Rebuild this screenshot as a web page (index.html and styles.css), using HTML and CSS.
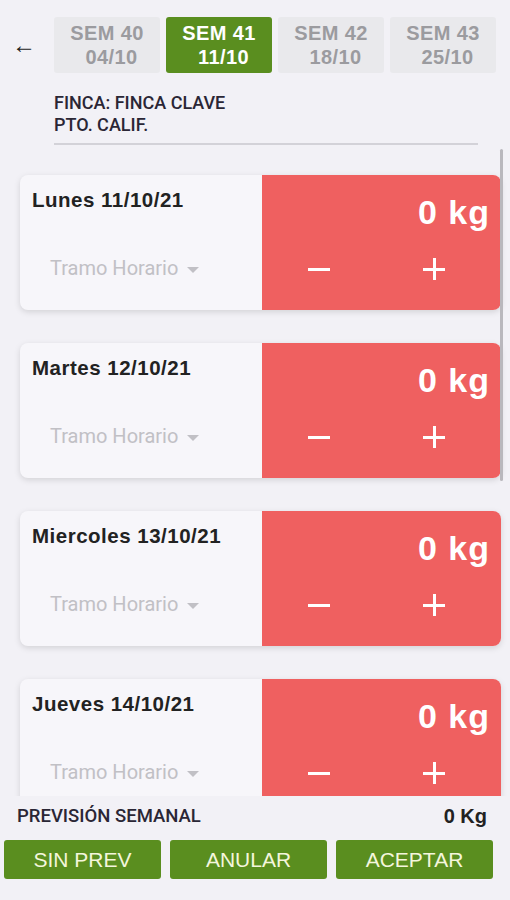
FILE: index.html
```html
<!DOCTYPE html>
<html lang="es">
<head>
  <meta charset="UTF-8" />
  <meta name="viewport" content="width=device-width, initial-scale=1.0" />
  <title>Previsión semanal</title>
  <link rel="stylesheet" href="styles.css">
</head>
<body>
  <header class="top">
    <button class="back">&larr;</button>
    <nav class="weeks">
      <div class="week">SEM 40<span>04/10</span></div>
      <div class="week active">SEM 41<span>11/10</span></div>
      <div class="week">SEM 42<span>18/10</span></div>
      <div class="week">SEM 43<span>25/10</span></div>
    </nav>
  </header>

  <div class="info">
    <p>FINCA: FINCA CLAVE</p>
    <p>PTO. CALIF.</p>
  </div>

  <main class="days">
    <div class="thumb"></div>

    <div class="day">
      <div class="day-left">
        <h3>Lunes 11/10/21</h3>
        <div class="tramo">Tramo Horario <i class="caret"></i></div>
      </div>
      <div class="day-right">
        <div class="kg">0 kg</div>
        <div class="ctrl"><span class="minus"></span><span class="plus"></span></div>
      </div>
    </div>

    <div class="day">
      <div class="day-left">
        <h3>Martes 12/10/21</h3>
        <div class="tramo">Tramo Horario <i class="caret"></i></div>
      </div>
      <div class="day-right">
        <div class="kg">0 kg</div>
        <div class="ctrl"><span class="minus"></span><span class="plus"></span></div>
      </div>
    </div>

    <div class="day">
      <div class="day-left">
        <h3>Miercoles 13/10/21</h3>
        <div class="tramo">Tramo Horario <i class="caret"></i></div>
      </div>
      <div class="day-right">
        <div class="kg">0 kg</div>
        <div class="ctrl"><span class="minus"></span><span class="plus"></span></div>
      </div>
    </div>

    <div class="day">
      <div class="day-left">
        <h3>Jueves 14/10/21</h3>
        <div class="tramo">Tramo Horario <i class="caret"></i></div>
      </div>
      <div class="day-right">
        <div class="kg">0 kg</div>
        <div class="ctrl"><span class="minus"></span><span class="plus"></span></div>
      </div>
    </div>
  </main>

  <footer>
    <div class="total">
      <span>PREVISIÓN SEMANAL</span>
      <strong>0 Kg</strong>
    </div>
    <div class="actions">
      <button>SIN PREV</button>
      <button>ANULAR</button>
      <button>ACEPTAR</button>
    </div>
  </footer>
</body>
</html>
```

FILE: styles.css
```css
* {
  box-sizing: border-box;
  font-family: 'Liberation Sans', Arial, sans-serif;
}
body {
  margin: 0;
  background: #f2f1f6;
  color: #222;
  height: 900px;
  overflow: hidden;
}
.top {
  display: flex;
  align-items: center;
  padding: 17px 0 0 11px;
}
.back {
  background: none;
  border: none;
  font-size: 24px;
  color: #222;
  width: 26px;
  padding: 0;
  margin-right: 17px;
  cursor: pointer;
}
.weeks {
  display: flex;
  gap: 6px;
}
.week {
  width: 106px;
  height: 56px;
  background: #e9e9ec;
  color: #9b9b9f;
  border-radius: 3px;
  font-size: 20px;
  font-weight: bold;
  letter-spacing: 0.4px;
  text-align: center;
  line-height: 24px;
  padding-top: 4px;
}
.week span {
  display: block;
  padding-left: 9px;
}
.week.active {
  background: #5a8e1f;
  color: #fff;
}
.info {
  margin: 19px 32px 0 54px;
  padding-bottom: 7px;
  border-bottom: 2px solid #d3d2d8;
}
.info p {
  margin: 0;
  font-family: Roboto, sans-serif;
  font-weight: 500;
  font-size: 18px;
  line-height: 22px;
  color: #2a2635;
}
.days {
  position: relative;
  height: 651px;
  overflow: hidden;
  padding: 30px 9px 0 20px;
}
.thumb {
  position: absolute;
  right: 7px;
  top: 4px;
  width: 3px;
  height: 332px;
  background: #b9b8bd;
  border-radius: 2px;
}
.day {
  display: flex;
  height: 135px;
  margin-bottom: 33px;
  border-radius: 8px;
  background: #f7f6fa;
  box-shadow: 0 2px 6px rgba(0,0,0,0.13);
}
.day-left {
  width: 242px;
  padding: 13px 12px;
}
.day-left h3 {
  margin: 0;
  font-size: 20.5px;
  font-weight: bold;
  letter-spacing: 0.5px;
  color: #222;
}
.tramo {
  margin: 44px 0 0 18px;
  font-family: Roboto, sans-serif;
  font-size: 20px;
  color: #c1c0c5;
}
.caret {
  display: inline-block;
  margin-left: 4px;
  vertical-align: middle;
  border-left: 6px solid transparent;
  border-right: 6px solid transparent;
  border-top: 6px solid #c1c0c5;
}
.day-right {
  flex: 1;
  background: #ef6060;
  border-radius: 0 8px 8px 0;
  color: #fff;
  padding: 17px 11px 0 0;
}
.kg {
  text-align: right;
  font-size: 34px;
  font-weight: bold;
  letter-spacing: 1px;
  line-height: 40px;
}
.ctrl {
  display: flex;
  align-items: center;
  gap: 93px;
  margin: 20px 0 0 46px;
  height: 34px;
}
.minus, .plus {
  position: relative;
  width: 22px;
  height: 22px;
}
.minus::before, .plus::before, .plus::after {
  content: "";
  position: absolute;
  background: #fff;
}
.minus::before, .plus::before {
  left: 0;
  top: 10px;
  width: 22px;
  height: 3px;
}
.plus::after {
  left: 10px;
  top: 0;
  width: 3px;
  height: 22px;
}
footer {
  padding: 0 17px 0 4px;
}
.total {
  display: flex;
  justify-content: space-between;
  align-items: center;
  padding-left: 13px;
  height: 40px;
}
.total span {
  font-family: Roboto, sans-serif;
  font-weight: 500;
  font-size: 18.5px;
  color: #2a2635;
}
.total strong {
  font-size: 20px;
  margin-right: 6px;
}
.actions {
  display: flex;
  gap: 9px;
  margin-top: 4px;
}
.actions button {
  flex: 1;
  height: 39px;
  background: #5a8e1f;
  color: #f4f6dc;
  border: none;
  border-radius: 3px;
  font-size: 21px;
  cursor: pointer;
}
```
